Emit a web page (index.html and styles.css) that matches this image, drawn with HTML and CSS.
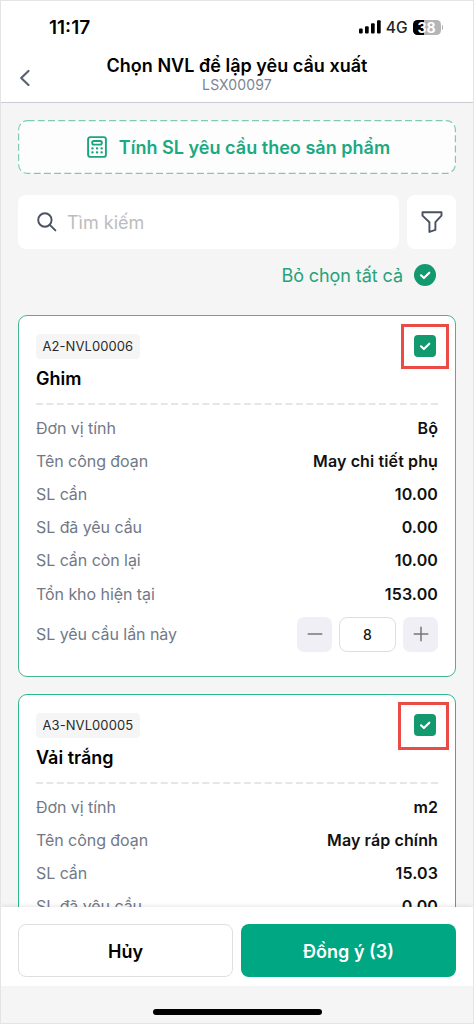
FILE: index.html
```html
<!DOCTYPE html>
<html lang="vi">
<head>
<meta charset="utf-8">
<title>Chọn NVL để lập yêu cầu xuất</title>
<link rel="stylesheet" href="styles.css">
</head>
<body>
<div class="screen">
  <header class="header">
    <div class="status">
      <span class="clock">11:17</span>
      <div class="status-right">
        <svg class="signal" width="22" height="14" viewBox="0 0 22 14"><rect x="0" y="8.5" width="3.7" height="5" rx="1"/><rect x="6" y="6.3" width="3.7" height="7.2" rx="1"/><rect x="12" y="3.3" width="3.7" height="10.2" rx="1"/><rect x="18" y="0.3" width="3.7" height="13.2" rx="1"/></svg>
        <span class="network">4G</span>
        <span class="battery">38</span>
        <span class="battery-cap"></span>
      </div>
    </div>
    <div class="titlebar">
      <svg class="back" width="12" height="18" viewBox="0 0 12 18"><path d="M9.5 2L2.2 9l7.3 7"/></svg>
      <div class="titles">
        <h1 class="title">Chọn NVL để lập yêu cầu xuất</h1>
        <div class="subtitle">LSX00097</div>
      </div>
    </div>
  </header>

  <main class="content">
    <div class="calc">
      <svg class="dashes" width="438" height="54" viewBox="0 0 438 54"><rect x=".6" y=".6" width="436.8" height="52.8" rx="9"/></svg>
      <svg class="calc-icon" width="20" height="22" viewBox="0 0 20 22"><rect x="1.1" y="1.1" width="17.8" height="19.8" rx="2.2"/><rect x="5.2" y="5" width="9.6" height="3.6" rx="1.6"/><g class="keys"><rect x="4.3" y="11.2" width="2.3" height="2.3" rx=".8"/><rect x="8.9" y="11.2" width="2.3" height="2.3" rx=".8"/><rect x="13.5" y="11.2" width="2.3" height="2.3" rx=".8"/><rect x="4.3" y="15.2" width="2.3" height="2.3" rx=".8"/><rect x="8.9" y="15.2" width="2.3" height="2.3" rx=".8"/><rect x="13.5" y="15.2" width="2.3" height="2.3" rx=".8"/></g></svg>
      <span class="calc-text">Tính SL yêu cầu theo sản phẩm</span>
    </div>

    <div class="search-row">
      <div class="search">
        <svg class="search-icon" width="20" height="20" viewBox="0 0 20 20"><circle cx="7.9" cy="8" r="6.7"/><path d="M12.8 12.9l5.6 5.5"/></svg>
        <span class="placeholder">Tìm kiếm</span>
      </div>
      <div class="filter">
        <svg class="filter-icon" width="22" height="22" viewBox="0 0 22 22"><path d="M1.5 1.3h19v3.3l-6.1 6.6v7.7l-6 2v-9.7L1.5 4.6z"/></svg>
      </div>
    </div>

    <div class="select-all">
      <span class="select-text">Bỏ chọn tất cả</span>
      <span class="check round"><svg width="22" height="22" viewBox="0 0 22 22"><path d="M7 11.3l2.9 2.8L15.3 8.7"/></svg></span>
    </div>

    <section class="card">
      <div class="card-top">
        <span class="chip">A2-NVL00006</span>
        <span class="check"><svg width="22" height="22" viewBox="0 0 22 22"><path d="M7 11.3l2.9 2.8L15.3 8.7"/></svg><span class="mark first"></span></span>
      </div>
      <h2 class="name">Ghim</h2>
      <svg class="rule" width="402" height="2"><path d="M0 1h402"/></svg>
      <div class="row"><span class="label">Đơn vị tính</span><span class="value">Bộ</span></div>
      <div class="row"><span class="label">Tên công đoạn</span><span class="value">May chi tiết phụ</span></div>
      <div class="row"><span class="label">SL cần</span><span class="value">10.00</span></div>
      <div class="row"><span class="label">SL đã yêu cầu</span><span class="value">0.00</span></div>
      <div class="row"><span class="label">SL cần còn lại</span><span class="value">10.00</span></div>
      <div class="row"><span class="label">Tồn kho hiện tại</span><span class="value">153.00</span></div>
      <div class="row step-row">
        <span class="label">SL yêu cầu lần này</span>
        <div class="stepper">
          <span class="step"><svg width="16" height="16" viewBox="0 0 16 16"><path d="M.7 8h14.6"/></svg></span>
          <span class="qty">8</span>
          <span class="step"><svg width="16" height="16" viewBox="0 0 16 16"><path d="M.7 8h14.6M8 .7v14.6"/></svg></span>
        </div>
      </div>
    </section>

    <section class="card">
      <div class="card-top">
        <span class="chip">A3-NVL00005</span>
        <span class="check"><svg width="22" height="22" viewBox="0 0 22 22"><path d="M7 11.3l2.9 2.8L15.3 8.7"/></svg><span class="mark second"></span></span>
      </div>
      <h2 class="name">Vải trắng</h2>
      <svg class="rule" width="402" height="2"><path d="M0 1h402"/></svg>
      <div class="row"><span class="label">Đơn vị tính</span><span class="value">m2</span></div>
      <div class="row"><span class="label">Tên công đoạn</span><span class="value">May ráp chính</span></div>
      <div class="row"><span class="label">SL cần</span><span class="value">15.03</span></div>
      <div class="row"><span class="label">SL đã yêu cầu</span><span class="value">0.00</span></div>
    </section>
  </main>

  <footer class="footer">
    <button class="btn cancel">Hủy</button>
    <button class="btn agree">Đồng ý (3)</button>
  </footer>
  <div class="home"><span class="home-bar"></span></div>
</div>
</body>
</html>
```

FILE: styles.css
```css
* { box-sizing: border-box; }
body { margin: 0; font-family: Inter, "Noto Sans", sans-serif; color: #111; }
svg { display: block; flex: none; }
h1, h2 { margin: 0; }

.screen {
  width: 474px;
  height: 1024px;
  border: 1px solid #e4e4e4;
  background: #f5f5f5;
  display: flex;
  flex-direction: column;
  overflow: hidden;
}

.header {
  flex: none;
  height: 102px;
  background: #fff;
  border-bottom: 1px solid #c9cbd3;
}
.status {
  display: flex;
  justify-content: space-between;
  align-items: center;
  height: 52px;
  padding: 0 30px 0 48px;
}
.clock { font-size: 19px; font-weight: 600; line-height: 22px; padding-top: 1px; color: #000; }
.status-right { display: flex; align-items: center; }
.signal { fill: #000; }
.network { font-size: 15.5px; line-height: 20px; padding-top: 2px; margin-left: 5px; font-weight: 500; color: #222; }
.battery {
  margin-left: 5px;
  width: 28px;
  height: 15px;
  border-radius: 4.5px;
  background: linear-gradient(90deg, #000 11px, #b5b5b5 11px);
  color: #fff;
  font-size: 14px;
  font-weight: 700;
  line-height: 15px;
  text-align: center;
}
.battery-cap { width: 1.5px; height: 5px; margin-left: 1px; border-radius: 0 2px 2px 0; background: #b5b5b5; }
.titlebar { display: grid; grid-template-columns: 36px 1fr 36px; height: 49px; padding-top: 2px; }
.back { margin: 14px 0 0 18px; fill: none; stroke: #59626e; stroke-width: 2.2; stroke-linecap: round; stroke-linejoin: round; }
.titles { text-align: center; }
.title { font-size: 18px; font-weight: 600; line-height: 22px; letter-spacing: .02px; white-space: nowrap; color: #000; }
.subtitle { font-size: 14px; line-height: 16px; letter-spacing: .15px; color: #7b8494; }

.content {
  flex: none;
  height: 804px;
  padding: 17px 17px 0;
  overflow: hidden;
}
.calc {
  position: relative;
  height: 54px;
  display: flex;
  align-items: center;
  justify-content: center;
  gap: 12px;
  padding: 0 0 0 3px;
  border-radius: 9px;
  background: #fdfdfd;
  color: #1aa981;
}
.dashes { position: absolute; inset: 0; fill: none; stroke: #7fcbb1; stroke-width: 1.2; stroke-dasharray: 7 3.2; }
.calc-icon { fill: none; stroke: #1aa57c; stroke-width: 1.9; }
.keys { fill: #1aa57c; stroke: none; }
.calc-text { font-size: 18px; font-weight: 600; line-height: 24px; letter-spacing: .02px; padding-top: 2px; white-space: nowrap; }

.search-row { display: flex; gap: 8px; margin-top: 21px; }
.search {
  flex: 1;
  height: 54px;
  display: flex;
  align-items: center;
  gap: 10px;
  padding-left: 19px;
  border-radius: 8px;
  background: #fff;
}
.search-icon, .filter-icon { fill: none; stroke: #4a5262; stroke-width: 1.9; stroke-linecap: round; }
.filter-icon { stroke-linejoin: round; }
.placeholder { font-size: 18px; line-height: 24px; padding-top: 2px; color: #bdbdbd; }
.filter { width: 49px; height: 54px; display: grid; place-items: center; border-radius: 8px; background: #fff; }

.select-all { display: flex; justify-content: flex-end; align-items: center; gap: 11px; height: 24px; margin: 14px 20px 0 0; }
.select-text { font-size: 18px; line-height: 24px; letter-spacing: -.08px; padding-top: 2px; color: #27a27b; white-space: nowrap; }
.check { position: relative; width: 22px; height: 22px; border-radius: 4px; background: #12996e; }
.check.round { border-radius: 50%; }
.check svg { fill: none; stroke: #fff; stroke-width: 2.1; stroke-linecap: round; stroke-linejoin: round; }
.mark { position: absolute; border: 3.5px solid #ea4b45; }
.mark.first { left: -13px; top: -11px; width: 48px; height: 45px; }
.mark.second { left: -16px; top: -12px; width: 51px; height: 48px; }

.card {
  margin-top: 28px;
  padding: 18px 17px;
  height: 362px;
  border: 1.3px solid #45b790;
  border-radius: 9px;
  background: #fff;
}
.card + .card { margin-top: 17px; border-color: #2db88b; }
.card-top { display: flex; justify-content: space-between; align-items: flex-start; height: 25px; padding-right: 2px; }
.card-top .check { margin-top: 1px; }
.chip { height: 25px; padding: 0 6.5px; border-radius: 4px; background: #f5f5f5; font-size: 13px; line-height: 25px; letter-spacing: .08px; color: #2a2a2a; white-space: nowrap; }
.name { margin-top: 8px; font-size: 18px; font-weight: 600; line-height: 24px; color: #000; }
.rule { margin: 12px 0 6px; stroke: #dedede; stroke-width: 1.4; stroke-dasharray: 7 3.395; }
.row { display: flex; justify-content: space-between; align-items: center; height: 33.2px; font-size: 16px; }
.label { color: #717987; letter-spacing: -.06px; white-space: nowrap; }
.value { font-weight: 600; color: #111; letter-spacing: .12px; white-space: nowrap; }
.step-row { height: 48px; }
.stepper { display: flex; gap: 7px; }
.step { width: 35px; height: 35px; display: grid; place-items: center; border-radius: 7px; background: #f0eff5; }
.step svg { fill: none; stroke: #777; stroke-width: 1.5; }
.qty { width: 57px; height: 35px; border: 1px solid #dedede; border-radius: 8px; text-align: center; line-height: 33px; font-size: 14px; font-weight: 500; color: #111; }

.footer {
  position: relative;
  flex: none;
  display: flex;
  gap: 8px;
  height: 79px;
  padding: 17px 17px 0;
  background: #fff;
  box-shadow: 0 -1px 4px rgba(0, 0, 0, .1);
}
.btn { flex: none; width: 215px; height: 53px; padding: 2px 0 0; border: 0; border-radius: 8px; font: 600 18px/24px Inter, "Noto Sans", sans-serif; }
.cancel { background: #fff; border: 1px solid #dfdfdf; color: #000; }
.agree { background: #00a783; color: #fff; }
.home { position: relative; flex: 1; padding-top: 23px; background: #f5f5f5; }
.home-bar { display: block; width: 169px; height: 6px; margin: 0 auto; border-radius: 3px; background: #000; }
```
